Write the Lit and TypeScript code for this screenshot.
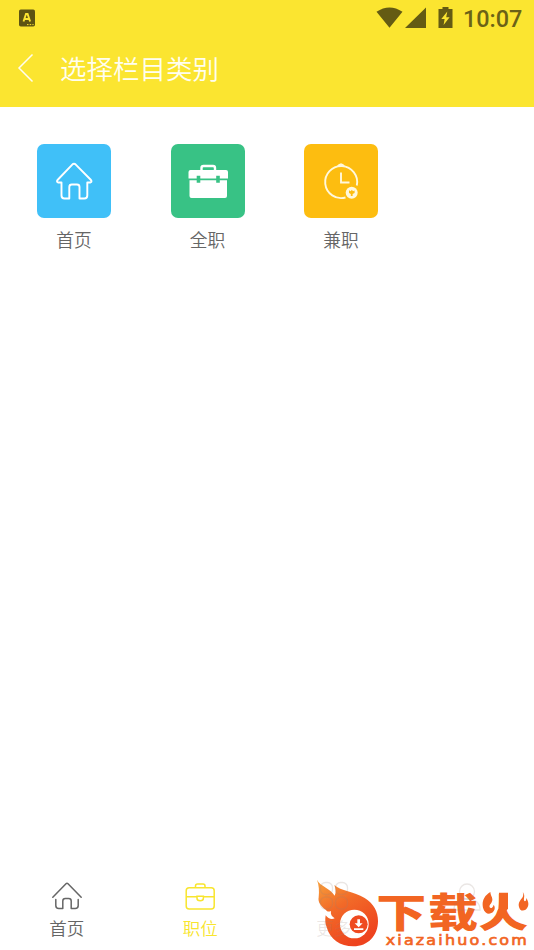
import { LitElement, html, css, svg } from "lit";
import { customElement } from "lit/decorators.js";

const homeTile = svg`<svg width="74" height="74" viewBox="0 0 74 74" fill="none" stroke="#fff" stroke-width="1.9" stroke-linejoin="round" stroke-linecap="round"><path d="M24.5 38.5H21q-2-1 0-3L35.500 20.300q1.500-1.300 3 0L53.500 35.500q2 2 0 3H50.300V51.500q0 3-3 3h-4.800V43q0-2.500-2.500-2.500h-5.200q-2.500 0-2.500 2.500V54.500h-4.800q-3 0-3-3z"/></svg>`;
const caseTile = svg`<svg width="74" height="74" viewBox="0 0 74 74"><path d="M30.500 27v-3q0-2 2-2h9.500q2 0 2 2v3" fill="none" stroke="#fff" stroke-width="2.400"/><path fill="#fff" d="M19.500 26h35.500q2 0 2 2v6.500H48.800v-2.700h-3.600v2.700H29.300v-2.700h-3.600v2.700H17.500V28q0-2 2-2zM18.500 36.300h7.200v2.400h3.600v-2.400h15.900v2.400h3.600v-2.400h7.200V52q0 2-2 2H20.500q-2 0-2-2z"/></svg>`;
const clockTile = svg`<svg width="74" height="74" viewBox="0 0 74 74" fill="none" stroke="#fff8dc" stroke-width="1.900"><path d="M41.500 53.500A16 16 0 1 1 52.800 41.500"/><path d="M32.500 22.500q2-2.600 4.500-3.200 2.500.6 4.500 3.200z" fill="#fff8dc" stroke="none"/><path d="M37 28.500V38.500H45.500"/><circle cx="47.700" cy="48.800" r="6" fill="#fff8dc" stroke="none"/><path d="M45 46.200l1.800 1 1-1.500 1.200 1.500 1.600-.8v2.600l-2 1v2h-1.800v-2l-1.800-1z" fill="#fdbd10" stroke="none"/></svg>`;
const homeTab = svg`<svg width="34" height="32" viewBox="0 0 34 32" fill="none" stroke="#666" stroke-width="1.500" stroke-linecap="round" stroke-linejoin="round"><path d="M2.800 17.300L16 3.700q1-.9 2 0L31.200 17.300"/><path d="M5.800 19.500V25.500q0 3 3 3H12.800V21q0-2.500 2.500-2.500h3.400q2.500 0 2.500 2.500v7.500H25.200q3 0 3-3V19.500"/></svg>`;
const jobTab = svg`<svg width="34" height="32" viewBox="0 0 34 32" fill="none" stroke="#f8e52e" stroke-width="1.500"><rect x="3.200" y="7.700" width="28" height="21.300" rx="3"/><path d="M12.500 7.500V6q0-2 2-2h5.500q2 0 2 2v1.500M3.200 16.800H14M20.400 16.800H31.200M14 16.300v2q0 2.500 3.200 2.500t3.200-2.500v-2z"/></svg>`;
const moreTab = svg`<svg width="34" height="32" viewBox="0 0 34 32" fill="none" stroke="currentColor" stroke-width="1.300"><rect x="3.500" y="2.500" width="12" height="12" rx="5"/><rect x="18.500" y="2.500" width="12" height="12" rx="5"/><rect x="3.500" y="17" width="12" height="12" rx="5"/><rect x="18.500" y="17" width="12" height="12" rx="5"/></svg>`;
const meTab = svg`<svg width="34" height="32" viewBox="0 0 34 32" fill="none" stroke="currentColor" stroke-width="1.300"><circle cx="17" cy="11.500" r="7.500"/><path d="M4 30q0-11 13-11t13 11z"/></svg>`;

@customElement("app-root")
export class AppRoot extends LitElement {
  static styles = css`
    :host { display: flex; flex-direction: column; position: relative; width: 534px; height: 950px; overflow: hidden; background: #fff; font-family: "Noto Sans CJK SC", sans-serif; }
    svg { display: block; flex: none; }
    header { height: 107px; background: #fbe530; box-sizing: border-box; }
    .status { height: 36px; display: flex; align-items: center; justify-content: space-between; padding: 0 12px 0 18px; }
    .right { display: flex; align-items: center; }
    .time { width: 59px; margin-left: 9px; font: 500 23.400px/36px Roboto, sans-serif; color: #6b6217; white-space: nowrap; padding-top: 1px; }
    .bar { height: 64px; display: flex; align-items: center; padding-left: 16px; }
    .title { margin-left: 24px; font-size: 26.500px; line-height: 64px; font-weight: 350; color: #fffef0; white-space: nowrap; }
    .grid { flex: 1; display: grid; grid-template-columns: repeat(4, 133.500px); align-content: start; padding: 37px 0 0 7.300px; }
    .cell { display: flex; flex-direction: column; align-items: center; font-size: 17.700px; line-height: 26px; color: #666; font-weight: 350; }
    .tile { width: 74px; height: 74px; border-radius: 7px; margin-bottom: 8px; }
    .blue { background: #40c0f8; }
    .green { background: #38c285; }
    .amber { background: #fdbd10; }
    nav { position: relative; z-index: 1; height: 70px; display: grid; grid-template-columns: repeat(4, 1fr); }
    .tab { display: flex; flex-direction: column; align-items: center; font-size: 17.500px; line-height: 26px; font-weight: 350; color: #666; gap: 3px; }
    .on { color: #f8e52e; }
    .dim { color: rgba(150, 130, 120, 0.2); }
    .mark { position: absolute; left: 305px; top: 870px; }
    .site { letter-spacing: 6px; }
  `;

  render() {
    return html`
      <header>
        <div class="status">
          <svg width="18" height="18" viewBox="0 0 18 18"><rect x="1" y="0.500" width="16" height="17" rx="1.800" fill="#5d5412"/><path d="M5.500 12.500L8 5h1.600l2.500 7.500M6.500 10h4.600" fill="none" stroke="#fbe530" stroke-width="1.900"/><path d="M9 15.600h1.500M11.700 15.600h1.500M14.400 15.600h1.200" stroke="#fbe530" stroke-width="1"/></svg>
          <div class="right">
            <svg width="78" height="24" viewBox="376 6 78 24" fill="#645b13"><path d="M376.500 11.800Q389.500 3 402.500 11.800L389.500 27.800zM426 7.500V28H405zM438.500 9h4V7h6v2h4V28H438.500z"/><path fill="#fbe530" d="M447.300 11.500l-6 7.500h3.300l-1 6 6-7.800h-3.400z"/></svg>
            <span class="time">10:07</span>
          </div>
        </div>
        <div class="bar">
          <svg width="20" height="30" viewBox="0 0 20 30" fill="none" stroke="#fffdf0" stroke-width="1.500"><path d="M16.500 1.500L3 15 16.500 28.500"/></svg>
          <span class="title">选择栏目类别</span>
        </div>
      </header>
      <main class="grid">
        <div class="cell"><div class="tile blue">${homeTile}</div>首页</div>
        <div class="cell"><div class="tile green">${caseTile}</div>全职</div>
        <div class="cell"><div class="tile amber">${clockTile}</div>兼职</div>
      </main>
      <nav>
        <div class="tab">${homeTab}<span>首页</span></div>
        <div class="tab on">${jobTab}<span>职位</span></div>
        <div class="tab dim">${moreTab}<span>更多</span></div>
        <div class="tab dim">${meTab}</div>
      </nav>
      <svg class="mark" width="229" height="80" viewBox="0 0 687 240">
        <defs><linearGradient id="fire" x1="0" y1="0" x2=".55" y2="1"><stop offset="0" stop-color="#f7a13c"/><stop offset=".45" stop-color="#f26a28"/><stop offset="1" stop-color="#ee431e"/></linearGradient></defs>
        <path fill="url(#fire)" d="M36 29C46 50 76 54 89 77C94 67 92 56 88 45C108 64 145 63 179 84C207 101 219 126 219 153C219 196 190 229 145 229C105 229 75 208 65 172C60 160 60 148 62 136C69 146 80 150 89 145C80 139 76 133 78 123C72 126 66 125 62 119C48 110 38 96 41 82C43 62 42 46 36 29Z"/>
        <circle cx="148" cy="162" r="43" fill="#fff"/>
        <circle cx="161" cy="163" r="27" fill="#ef4a20"/>
        <path d="M157 148h8v12h8l-12 12-12-12h8zM147 175h28v5h-28z" fill="#fff"/>
        <g fill="#f26522" font-family="Noto Sans CJK SC, sans-serif" font-weight="900" font-size="118">
          <text x="214" y="170" textLength="150" lengthAdjust="spacingAndGlyphs">下</text>
          <text x="369" y="170" textLength="150" lengthAdjust="spacingAndGlyphs">载</text>
          <text x="520" y="170" textLength="150" lengthAdjust="spacingAndGlyphs">火</text>
        </g>
        <path fill="#fff" d="M519 60H580V116L562 138L519 143ZM609 60H690V138H634L618 128L609 112Z"/>
        <path fill="#f26522" d="M556 66C536 78 530 96 534 113C538 128 549 134 557 130C570 125 572 112 566 104C564 113 557 117 554 112C551 104 561 101 562 90C563 81 556 76 556 66ZM653 66C658 77 652 84 645 92C639 100 640 110 646 119C652 125 664 121 668 111C673 100 668 91 664 84C664 94 659 96 657 91C655 83 662 77 653 66ZM582 68H609V116L590 138L582 132Z"/>
        <text class="site" x="242" y="226" font-family="DejaVu Sans, sans-serif" font-size="44" fill="#f26522" stroke="#f26522" stroke-width="2" textLength="430" lengthAdjust="spacingAndGlyphs">xiazaihuo.com</text>
      </svg>
    `;
  }
}
